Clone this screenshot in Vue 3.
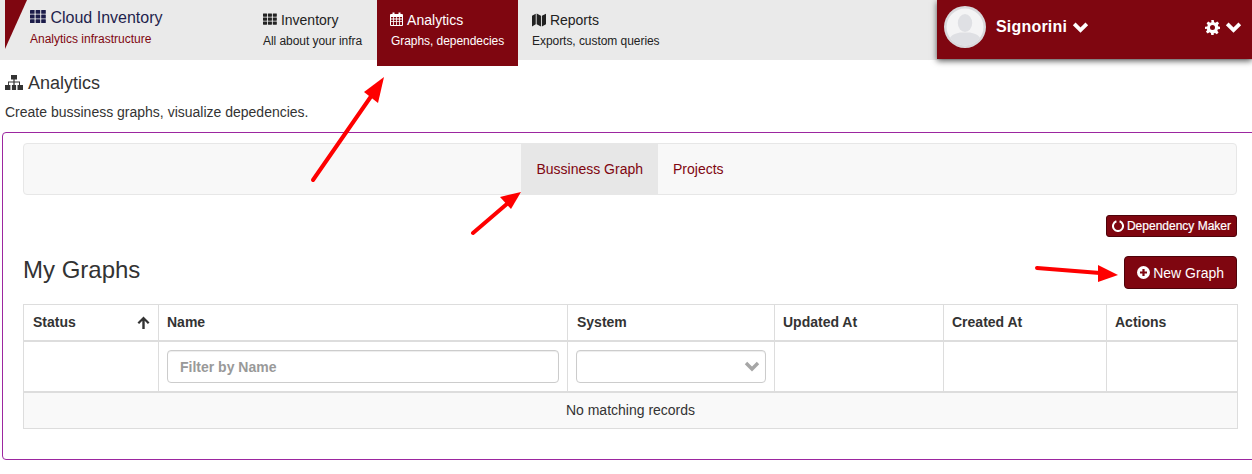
<script setup>
const navItems = [
  { icon: 'th', title: 'Inventory', sub: 'All about your infra' },
  { icon: 'calendar', title: 'Analytics', sub: 'Graphs, dependecies', active: true },
  { icon: 'map', title: 'Reports', sub: 'Exports, custom queries' },
];

const columns = [
  { label: 'Status', width: '135px' },
  { label: 'Name', width: '409px' },
  { label: 'System', width: '207px' },
  { label: 'Updated At', width: '169px' },
  { label: 'Created At', width: '163px' },
  { label: 'Actions', width: '131px' },
];

const gridCells = [0, 1, 2].flatMap((y) => [0, 1, 2].map((x) => ({ x: x * 5.6, y: y * 4.6 })));
</script>

<template>
  <div class="page">
    <header class="topbar">
      <div class="brand">
        <svg class="wedge" width="27" height="49" viewBox="0 0 27 49"><polygon points="5,0 27,0 5,49" /></svg>
        <div class="brand-text">
          <div class="brand-title">
            <svg class="icon-th" width="16" height="14" viewBox="0 0 16 14"><rect v-for="(c, i) in gridCells" :key="i" :x="c.x" :y="c.y" width="4.6" height="3.8" rx="0.5" /></svg>
            Cloud Inventory
          </div>
          <div class="brand-sub">Analytics infrastructure</div>
        </div>
      </div>
      <nav class="nav">
        <a v-for="item in navItems" :key="item.title" class="nav-item" :class="{ active: item.active }">
          <div class="nav-title">
            <svg v-if="item.icon === 'th'" width="14" height="13" viewBox="0 0 16 14"><rect v-for="(c, i) in gridCells" :key="i" :x="c.x" :y="c.y" width="4.6" height="3.8" rx="0.5" /></svg>
            <svg v-else-if="item.icon === 'calendar'" class="icon-cal" width="13" height="14" viewBox="0 0 13 14">
              <path fill-rule="evenodd" d="M1 2h1.5V.6h2V2h4V.6h2V2H12a1 1 0 0 1 1 1v10a1 1 0 0 1-1 1H1a1 1 0 0 1-1-1V3a1 1 0 0 1 1-1zM1 5v1.6h2.2V5zm3 0v1.6h2.1V5zm2.9 0v1.6H9V5zm2.9 0v1.6H12V5zM1 7.4V9h2.2V7.4zm3 0V9h2.1V7.4zm2.9 0V9H9V7.4zm2.9 0V9H12V7.4zM1 9.8V13h2.2V9.8zm3 0V13h2.1V9.8zm2.9 0V13H9V9.8zm2.9 0V13H12V9.8z" />
            </svg>
            <svg v-else class="icon-map" width="14" height="14" viewBox="0 0 15 14"><path d="M0 2.400 4 .2v11.400L0 14zM5 0l4.600 2.400V14L5 11.600zM10.600 2.400 15 .2v11.400L10.600 14z" /></svg>
            {{ item.title }}
          </div>
          <div class="nav-sub">{{ item.sub }}</div>
        </a>
      </nav>
      <div class="user">
        <svg class="avatar" width="42" height="42" viewBox="0 0 42 42">
          <defs><clipPath id="avatar-clip"><circle cx="21" cy="21" r="18.5" /></clipPath></defs>
          <circle cx="21" cy="21" r="21" fill="#d9d9dc" />
          <circle cx="21" cy="21" r="18.5" fill="#f4f4f5" />
          <g clip-path="url(#avatar-clip)" fill="#dfe0e4">
            <ellipse cx="21" cy="17" rx="7.2" ry="9" />
            <path d="M4 40c0-9 4-12 12-13.5h10C34 28 38 31 38 40z" />
          </g>
        </svg>
        <span class="user-name">Signorini</span>
        <svg class="chev" width="17" height="12" viewBox="0 0 17 12"><polyline points="2.2,2.800 8.500,9 14.800,2.800" /></svg>
        <svg class="gear" width="15" height="15" viewBox="0 0 24 24">
          <path fill-rule="evenodd" d="M10 0h4l.6 3.4 2.2.9L19.700 2.300l2.800 2.800-2 2.900.9 2.200L24 10.800v3.400l-3.400.6-.9 2.200 2 2.900-2.800 2.800-2.900-2-2.200.9L14 24h-4l-.6-3.400-2.200-.9-2.900 2-2.800-2.800 2-2.900-.9-2.200L0 14.200v-3.400l3.600-.6.900-2.200-2-2.900 2.800-2.800 2.900 2 2.200-.9zM12 8a4 4 0 1 0 0 8 4 4 0 0 0 0-8z" />
        </svg>
        <svg class="chev" width="17" height="12" viewBox="0 0 17 12"><polyline points="2.2,2.800 8.500,9 14.800,2.800" /></svg>
      </div>
    </header>

    <main class="content">
      <h1 class="page-title">
        <svg width="18" height="15" viewBox="0 0 18 15">
          <path d="M6 0h6v4.500H9.600v2h5.400V10h3v5h-5.500v-5h1.500V7.500H9.600V10h1.500v5H6.900v-5h1.500V7.500H3.900V10h1.500v5H0v-5h3V6.500h5.400v-2H6z" />
        </svg>
        Analytics
      </h1>
      <p class="page-desc">Create bussiness graphs, visualize depedencies.</p>

      <section class="panel">
        <div class="tabs">
          <a class="tab active">Bussiness Graph</a>
          <a class="tab">Projects</a>
        </div>

        <div class="maker-row">
          <button class="btn btn-xs">
            <svg width="12" height="12" viewBox="0 0 12 12"><path d="M4.400 1.300A5 5 0 1 0 7.600 1.300" fill="none" stroke="#fff" stroke-width="2" /></svg>
            Dependency Maker
          </button>
        </div>

        <div class="title-row">
          <h2>My Graphs</h2>
          <button class="btn btn-md">
            <svg width="13" height="13" viewBox="0 0 13 13">
              <circle cx="6.500" cy="6.500" r="6.500" fill="#fff" />
              <path d="M5.400 3h2.200v2.400H10v2.200H7.600V10H5.400V7.600H3V5.400h2.400z" fill="#7f0610" />
            </svg>
            New Graph
          </button>
        </div>

        <table class="grid">
          <colgroup><col v-for="c in columns" :key="c.label" :style="{ width: c.width }" /></colgroup>
          <thead>
            <tr class="head-row">
              <th v-for="c in columns" :key="c.label">
                <div class="th-inner">
                  {{ c.label }}
                  <svg v-if="c.label === 'Status'" width="13" height="13" viewBox="0 0 13 13"><path d="M6.500 0.500 12.500 6.500 10.900 8 7.700 4.800V13H5.300V4.800L2.100 8 .5 6.500z" fill="#333" /></svg>
                </div>
              </th>
            </tr>
            <tr class="filter-row">
              <td></td>
              <td><input class="field" type="text" placeholder="Filter by Name" /></td>
              <td>
                <div class="field select">
                  <svg width="16" height="11" viewBox="0 0 16 11"><polyline points="2,2 8,8 14,2" /></svg>
                </div>
              </td>
              <td></td>
              <td></td>
              <td></td>
            </tr>
          </thead>
          <tbody>
            <tr class="empty-row"><td colspan="6">No matching records</td></tr>
          </tbody>
        </table>
      </section>
    </main>

    <svg class="arrows" width="1252" height="474" viewBox="0 0 1252 474">
      <g stroke="#fe0000" stroke-width="4" stroke-linecap="round" fill="#fe0000">
        <line x1="313" y1="180" x2="372" y2="95" />
        <line x1="473" y1="233" x2="508" y2="203" />
        <line x1="1037" y1="268" x2="1100" y2="273" />
      </g>
      <g fill="#fe0000">
        <polygon points="384,77 378,103 364,92" />
        <polygon points="521,192 511,209 500,197" />
        <polygon points="1118,275 1098,282 1098,265" />
      </g>
    </svg>
  </div>
</template>

<style scoped>
.page {
  position: relative;
  width: 1252px;
  height: 474px;
  overflow: hidden;
  font-family: 'Liberation Sans', Arial, sans-serif;
  font-size: 14px;
  color: #333;
  background: #fff;
}

.topbar {
  display: flex;
  align-items: flex-start;
  height: 60px;
  background: #eaeaea;
}

.brand {
  display: flex;
  width: 249px;
  flex: none;
}

.wedge {
  flex: none;
  fill: #7f0610;
}

.brand-text {
  padding: 9px 0 0 3px;
}

.brand-title {
  font-size: 16px;
  line-height: 18px;
  color: #1f1f4d;
}

.icon-th {
  fill: #1c1c4a;
  vertical-align: -1px;
}

.brand-sub {
  margin-top: 5px;
  font-size: 12px;
  line-height: 14px;
  color: #7f0610;
}

.nav {
  display: flex;
}

.nav-item {
  height: 60px;
  min-width: 128px;
  padding: 12px 14px 0;
  box-sizing: border-box;
  color: #222;
  white-space: nowrap;
}

.nav-item svg {
  fill: #222;
  vertical-align: -1px;
}

.nav-item.active {
  width: 141px;
  height: 66px;
  background: #7f0610;
  color: #fff;
}

.nav-item.active svg {
  fill: #fff;
}

.nav-item .icon-cal {
  margin: 0 1px 0 -1px;
}

.nav-item .icon-map {
  vertical-align: -2px;
}

.nav-title {
  font-size: 14px;
  line-height: 16px;
}

.nav-sub {
  margin-top: 6px;
  font-size: 12px;
  line-height: 14px;
  letter-spacing: -0.05px;
}

.user {
  display: flex;
  align-items: center;
  height: 59px;
  width: 315px;
  margin-left: auto;
  box-sizing: border-box;
  padding: 0 10px 5px 7px;
  background: #7f0610;
  color: #fff;
  box-shadow: 0 2px 6px rgba(0, 0, 0, 0.65);
  position: relative;
}

.user-name {
  margin-left: 10px;
  font-size: 16px;
  font-weight: bold;
  letter-spacing: 0.2px;
}

.chev {
  margin-left: 5px;
  fill: none;
  stroke: #fff;
  stroke-width: 3.8;
}

.gear {
  margin-left: auto;
  fill: #fff;
}

.content {
  padding: 13px 0 0 0;
}

.page-title {
  margin: 0 0 0 5px;
  font-size: 18px;
  font-weight: normal;
  line-height: 20px;
}

.page-title svg {
  fill: #333;
  vertical-align: -1px;
  margin-right: 1px;
}

.page-desc {
  margin: 11px 0 0 5px;
  line-height: 16px;
}

.panel {
  margin: 12px -10px 0 2px;
  height: 328px;
  box-sizing: border-box;
  padding: 10px 24px 0 20px;
  border: 1px solid #9c27a0;
  border-radius: 4px;
}

.tabs {
  display: flex;
  justify-content: center;
  height: 52px;
  box-sizing: border-box;
  border: 1px solid #e7e7e7;
  border-radius: 4px;
  background: #f8f8f8;
}

.tab {
  padding: 0 15px;
  line-height: 50px;
  color: #7f0610;
}

.tab.active {
  background: #e7e7e7;
}

.maker-row {
  display: flex;
  justify-content: flex-end;
  margin-top: 20px;
}

.btn {
  display: inline-flex;
  align-items: center;
  font-family: inherit;
  color: #fff;
  background: #7f0610;
  border: 1px solid #4e030a;
}

.btn-xs {
  height: 22px;
  padding: 0 5px;
  gap: 3px;
  font-size: 12px;
  border-radius: 3px;
  -webkit-text-stroke: 0.2px #fff;
}

.btn-md {
  height: 33px;
  padding: 0 12px;
  gap: 3px;
  font-size: 14px;
  border-radius: 4px;
}

.title-row {
  display: flex;
  justify-content: space-between;
  align-items: center;
  margin-top: 19px;
}

.title-row h2 {
  margin: 0 0 6px;
  font-size: 24px;
  font-weight: normal;
  line-height: 26px;
}

.grid {
  width: 1214px;
  margin-top: 15px;
  table-layout: fixed;
  border-collapse: collapse;
}

.grid th,
.grid td {
  border: 1px solid #ddd;
  padding: 0 8px;
  box-sizing: border-box;
}

.head-row th {
  height: 36px;
  text-align: left;
  border-bottom-width: 2px;
}

.th-inner {
  display: flex;
  justify-content: space-between;
  align-items: center;
}

.head-row th:nth-child(1) .th-inner,
.head-row th:nth-child(3) .th-inner {
  padding-left: 1px;
}

.filter-row td {
  height: 51px;
  border-bottom-width: 2px;
}

.field {
  display: flex;
  align-items: center;
  justify-content: flex-end;
  width: 100%;
  height: 33px;
  box-sizing: border-box;
  border: 1px solid #ccc;
  border-radius: 4px;
  padding: 2px 12px 0;
  font-family: inherit;
  font-size: 14px;
  font-weight: bold;
  box-shadow: inset 0 1px 1px rgba(0, 0, 0, 0.075);
}

.field::placeholder {
  color: #999;
  opacity: 1;
}

.select {
  padding: 0 5px 0 0;
}

.select svg {
  fill: none;
  stroke: #a6a6a6;
  stroke-width: 3.4;
}

.empty-row td {
  height: 37px;
  text-align: center;
  background: #f9f9f9;
}

.arrows {
  position: absolute;
  left: 0;
  top: 0;
  pointer-events: none;
}
</style>
